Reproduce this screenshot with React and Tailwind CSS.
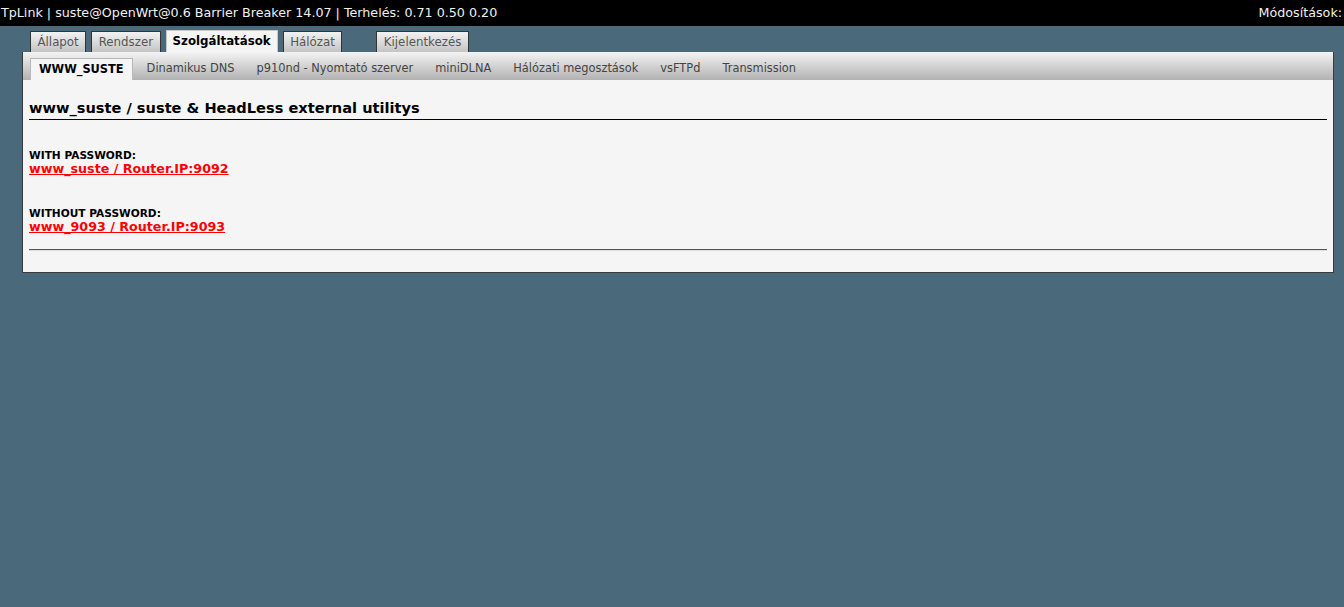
import React from "react";

const font = { fontFamily: '"DejaVu Sans", Verdana, sans-serif' };

function TopTab({ label, active, className = "" }) {
  if (active) {
    return (
      <div className={`h-[22px] pt-[1px] px-[6px] flex items-center border border-b-0 border-[#c8c8c8] bg-[#f5f5f5] text-[11.8px] leading-none font-bold text-black ${className}`}>
        {label}
      </div>
    );
  }
  return (
    <div className={`h-[21px] pt-[2px] px-[6.5px] flex items-center border border-b-0 border-[#333] bg-gradient-to-b from-[#f2f2f2] to-[#c4c4c4] text-[11.8px] leading-none text-[#555] ${className}`}>
      {label}
    </div>
  );
}

export default function App() {
  const subs = ["Dinamikus DNS", "p910nd - Nyomtató szerver", "miniDLNA", "Hálózati megosztások", "vsFTPd", "Transmission"];
  return (
    <div className="w-[1344px] h-[607px] bg-[#4a6a7c] overflow-hidden" style={font}>
      <div className="h-[26px] bg-black flex items-center justify-between pl-[1px] pr-[2px] text-[12.7px] text-[#f0f0f0]">
        <span>TpLink | suste@OpenWrt@0.6 Barrier Breaker 14.07 | Terhelés: 0.71 0.50 0.20</span>
        <span>Módosítások:</span>
      </div>
      <div className="flex items-end pl-[30px] gap-[5px] h-[26px]">
        <TopTab label="Állapot" />
        <TopTab label="Rendszer" />
        <TopTab label="Szolgáltatások" active />
        <TopTab label="Hálózat" />
        <TopTab label="Kijelentkezés" className="ml-[29px]" />
      </div>
      <div className="ml-[22px] w-[1312px] h-[221px] border border-t-0 border-[#3a3a3a] bg-[#f5f5f5] flex flex-col">
        <div className="h-[28px] shrink-0 bg-gradient-to-b from-[#f4f4f4] to-[#b2b2b2] flex items-end pl-[7px]">
          <div className="h-[22px] px-[8px] flex items-center border border-b-0 border-[#b8b8b8] bg-[#f5f5f5] text-[11.4px] font-bold text-black">
            WWW_SUSTE
          </div>
          <div className="flex h-[22px] items-center text-[11.4px] text-[#444] gap-[22px] ml-[14px]">
            {subs.map((s) => (
              <span key={s}>{s}</span>
            ))}
          </div>
        </div>
        <div className="px-[6px] pt-[18px]">
          <div className="text-[14.6px] font-bold text-black leading-[20px] pb-[1px] border-b border-black">
            www_suste / suste &amp; HeadLess external utilitys
          </div>
          <div className="mt-[29px] text-[10.6px] font-bold text-black leading-[12px]">WITH PASSWORD:</div>
          <a href="#" className="block w-fit text-[12.7px] font-bold text-[#ff0000] underline leading-[16px]">
            www_suste / Router.IP:9092
          </a>
          <div className="mt-[30px] text-[10.6px] font-bold text-black leading-[12px]">WITHOUT PASSWORD:</div>
          <a href="#" className="block w-fit text-[12.7px] font-bold text-[#ff0000] underline leading-[16px]">
            www_9093 / Router.IP:9093
          </a>
          <div className="mt-[14px] border-t border-[#555] border-b border-b-[#ddd] h-0" />
        </div>
      </div>
    </div>
  );
}
